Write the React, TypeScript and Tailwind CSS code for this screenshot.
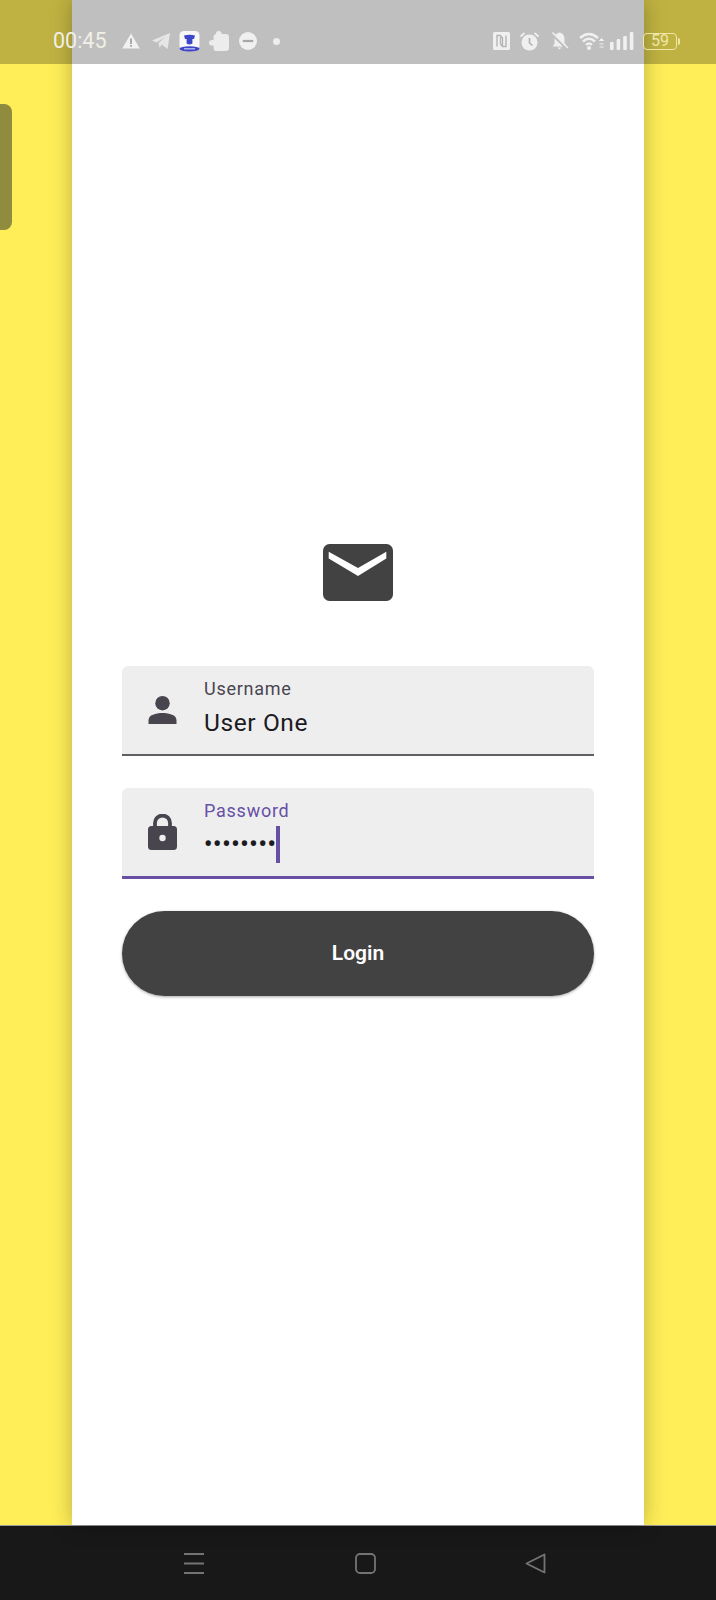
import React from "react";

const font = { fontFamily: "Roboto, 'Noto Sans', sans-serif" };

function Warning() {
  return (
    <svg width="18" height="16" viewBox="0 0 18 16" className="block">
      <path d="M9 0.5 L17.8 15.5 H0.2 Z" fill="#f1f1f1" />
      <rect x="8.2" y="5.5" width="1.6" height="5.5" fill="#9a9a9a" />
      <rect x="8.2" y="12" width="1.6" height="1.7" fill="#9a9a9a" />
    </svg>
  );
}
function Telegram() {
  return (
    <svg width="18" height="16" viewBox="0 0 18 16" className="block">
      <path d="M0 7.6 L18 0 L15.6 16 L9.6 11.6 L7.6 15 L6.6 10 L13.5 3.8 L4.6 9.4 Z" fill="#e6e6e6" />
    </svg>
  );
}
function AppBadge() {
  return (
    <svg width="21" height="21" viewBox="0 0 21 21" className="block">
      <rect x="0.5" y="0" width="20" height="19" rx="4.5" fill="#f7f7f7" />
      <path d="M5 4.5 Q10.5 3 16 4.5 L15 8 H13.4 V12.5 Q10.5 14.5 7.6 12.5 V8 H6 Z" fill="#3d46c9" />
      <ellipse cx="10.5" cy="17.8" rx="10" ry="2.6" fill="#3d46c9" />
      <rect x="5" y="17.2" width="11" height="1.2" fill="#c8ccf5" />
    </svg>
  );
}
function Puzzle() {
  return (
    <svg width="20" height="20" viewBox="0 0 20 20" className="block">
      <path d="M7 3 Q7 0 9.8 0 Q12.6 0 12.6 3 H17 Q20 3 20 6 V17 Q20 20 17 20 H7 Q4.6 20 4.6 17 V14.5 Q0 15 0 11.7 Q0 8.4 4.6 9 V5.5 Q4.6 3 7 3 Z" fill="#ececec" />
    </svg>
  );
}
function Dnd() {
  return (
    <svg width="18" height="18" viewBox="0 0 18 18" className="block">
      <circle cx="9" cy="9" r="9" fill="#f0f0f0" />
      <rect x="3.8" y="7.9" width="10.4" height="2.2" fill="#a8a8a8" />
    </svg>
  );
}
function Nfc() {
  return (
    <svg width="17" height="18" viewBox="0 0 17 18" className="block">
      <rect width="17" height="18" rx="1.5" fill="#f0f0f0" />
      <path d="M4 14.5 V3.5 H7.5 L9.5 6 V14 M13 3.5 V14.5 H9.5 L7.5 12 V5" fill="none" stroke="#b5b5b5" strokeWidth="1.4" />
    </svg>
  );
}
function Alarm() {
  return (
    <svg width="19" height="19" viewBox="0 0 19 19" className="block">
      <circle cx="9.5" cy="10.5" r="8" fill="#f0f0f0" />
      <path d="M0.5 4.5 L4.5 1 M18.5 4.5 L14.5 1" stroke="#f0f0f0" strokeWidth="1.8" />
      <path d="M9.5 6 V11 L12.5 13.5" fill="none" stroke="#b0b0b0" strokeWidth="1.6" />
    </svg>
  );
}
function BellOff() {
  return (
    <svg width="19" height="18" viewBox="0 0 19 18" className="block">
      <path d="M9.5 0.5 Q14.5 1.5 14.5 7 V12 L16.5 14.5 H2.5 L4.5 12 V7 Q4.5 1.5 9.5 0.5 Z" fill="#f0f0f0" />
      <path d="M7.5 15.5 H11.5 L9.5 17.5 Z" fill="#f0f0f0" />
      <path d="M1.5 1.5 L17.5 17" stroke="#bfbfbf" strokeWidth="3" />
      <path d="M2.5 0.5 L18 16" stroke="#f0f0f0" strokeWidth="1.5" />
    </svg>
  );
}
function Wifi() {
  return (
    <svg width="25" height="18" viewBox="0 0 25 18" className="block">
      <path d="M1 6 Q10 -2 19 6" fill="none" stroke="#f0f0f0" strokeWidth="2.6" />
      <path d="M4 9.5 Q10 4 16 9.5" fill="none" stroke="#f0f0f0" strokeWidth="2.6" />
      <path d="M7 12.8 Q10 10.2 13 12.8" fill="none" stroke="#f0f0f0" strokeWidth="2.4" />
      <circle cx="10" cy="16" r="2" fill="#f0f0f0" />
      <path d="M20.5 8.5 H24.5 L22.5 6.5 Z M20.5 12 H24.5 M20.5 15 H24.5" fill="#f0f0f0" stroke="#f0f0f0" strokeWidth="1" />
    </svg>
  );
}
function Signal() {
  return (
    <svg width="24" height="18" viewBox="0 0 24 18" className="block">
      <rect x="0" y="10" width="3.6" height="8" rx="1" fill="#f0f0f0" />
      <rect x="6.6" y="7" width="3.6" height="11" rx="1" fill="#f0f0f0" />
      <rect x="13.2" y="4" width="3.6" height="14" rx="1" fill="#f0f0f0" />
      <rect x="19.8" y="0" width="3.6" height="18" rx="1" fill="#f0f0f0" />
    </svg>
  );
}
function Battery() {
  return (
    <div className="flex items-center">
      <div className="flex h-[17px] w-[34px] items-center justify-center rounded-[4px] border border-[#efe6a6] text-[16px] leading-none text-[#efe6a6]">
        59
      </div>
      <div className="ml-[1px] h-[7px] w-[2px] rounded-r-sm bg-[#efe6a6]" />
    </div>
  );
}

function Field({
  label,
  focused,
  icon,
  children,
}: {
  label: string;
  focused?: boolean;
  icon: React.ReactNode;
  children: React.ReactNode;
}) {
  return (
    <div
      className={
        focused
          ? "flex h-[91px] items-center rounded-t-[6px] border-b-[3px] border-[#6750a4] bg-[#eeeeef]"
          : "flex h-[90px] items-center rounded-t-[6px] border-b-2 border-[#5f5f63] bg-[#eeeeef]"
      }
    >
      <div className="flex w-[80px] shrink-0 justify-center">{icon}</div>
      <div className="flex h-full flex-1 flex-col pl-[2px] pt-[11px]">
        <div
          className={
            focused
              ? "text-[18px] leading-[24px] tracking-[0.75px] text-[#6750a4]"
              : "text-[18px] leading-[24px] tracking-[0.75px] text-[#49454f]"
          }
        >
          {label}
        </div>
        {children}
      </div>
    </div>
  );
}

export default function App() {
  return (
    <div className="relative flex h-[1600px] w-[716px] flex-col overflow-hidden bg-[#ffee58]" style={font}>
      <div className="relative flex flex-1 justify-center">
        {/* drawer handle */}
        <div className="absolute left-0 top-[104px] h-[126px] w-[12px] rounded-r-[8px] bg-[#8f8b3f]" />
        {/* panel */}
        <div className="flex w-[572px] flex-col items-center bg-white px-[50px] pt-[544px] shadow-[0_0_20px_rgba(0,0,0,0.27)]">
          <svg width="70" height="57" viewBox="0 0 70 57" className="block">
            <rect width="70" height="57" rx="6.5" fill="#424242" />
            <path d="M5.7 7.7 L35 24 L63.3 7.7 V14.5 L35 32 L5.7 14.5 Z" fill="#ffffff" />
          </svg>
          <div className="mt-[65px] flex w-[472px] flex-col">
            <Field
              label="Username"
              icon={
                <svg width="29" height="28" viewBox="0 0 30 29" className="block">
                  <circle cx="15" cy="7.5" r="7.5" fill="#49454f" />
                  <path d="M0.5 29 V25 C0.5 19.5 8 17.5 15 17.5 C22 17.5 29.5 19.5 29.5 25 V29 Z" fill="#49454f" />
                </svg>
              }
            >
              <div className="mt-[6px] text-[24.5px] leading-[32px] tracking-[0.6px] text-[#1c1b1f]">User One</div>
            </Field>
            <div className="mt-[32px]">
              <Field
                label="Password"
                focused
                icon={
                  <svg width="29" height="36" viewBox="0 0 29 36" className="block">
                    <path d="M7 14 V9 A7.5 7.5 0 0 1 22 9 V14" fill="none" stroke="#49454f" strokeWidth="3.8" />
                    <rect y="12" width="29" height="24" rx="3.5" fill="#49454f" />
                    <circle cx="14.5" cy="24" r="3.2" fill="#eeeeef" />
                  </svg>
                }
              >
                <div className="mt-[3px] flex h-[37px] items-center">
                  <span className="w-[70px] text-[23px] font-bold leading-[37px] tracking-[0.8px] text-[#1c1b1f]">••••••••</span>
                  <span className="ml-[2px] h-[37px] w-[4px] bg-[#6750a4]" />
                </div>
              </Field>
            </div>
            <button className="mt-[32px] flex h-[85px] items-center justify-center rounded-[43px] bg-[#424242] text-[21px] font-semibold text-white shadow-[0_1px_3px_rgba(0,0,0,0.35)]">
              Login
            </button>
          </div>
        </div>
      </div>

      {/* navigation bar */}
      <div className="flex h-[75px] shrink-0 items-start border-t border-[#9a9a9a] bg-[#181818] pt-[27px]">
        <svg width="20" height="21" viewBox="0 0 20 21" className="ml-[184px] block">
          <path d="M0 1 H20 M0 10.5 H20 M0 20 H20" stroke="#747474" strokeWidth="1.8" />
        </svg>
        <svg width="21" height="21" viewBox="0 0 21 21" className="ml-[151px] block">
          <rect x="1" y="1" width="19" height="19" rx="4" fill="none" stroke="#747474" strokeWidth="1.8" />
        </svg>
        <svg width="21" height="21" viewBox="0 0 21 21" className="ml-[149px] block">
          <path d="M19.5 1.5 V19.5 L1.5 10.5 Z" fill="none" stroke="#747474" strokeWidth="1.8" strokeLinejoin="round" />
        </svg>
      </div>

      {/* status bar overlay */}
      <div className="absolute inset-x-0 top-0 flex h-[64px] items-center bg-black/25 pl-[53px] pt-[18px]">
        <span className="w-[69px] text-[21.5px] font-normal leading-none text-[#f0f0e4]">00:45</span>
        <Warning />
        <div className="ml-[12px]"><Telegram /></div>
        <div className="ml-[9px]"><AppBadge /></div>
        <div className="ml-[9px]"><Puzzle /></div>
        <div className="ml-[10px]"><Dnd /></div>
        <div className="ml-[16px] h-[7px] w-[7px] rounded-full bg-[#eeeeee]" />
        <div className="ml-[213px]"><Nfc /></div>
        <div className="ml-[10px]"><Alarm /></div>
        <div className="ml-[11px]"><BellOff /></div>
        <div className="ml-[10px]"><Wifi /></div>
        <div className="ml-[6px]"><Signal /></div>
        <div className="ml-[9px]"><Battery /></div>
      </div>
    </div>
  );
}
